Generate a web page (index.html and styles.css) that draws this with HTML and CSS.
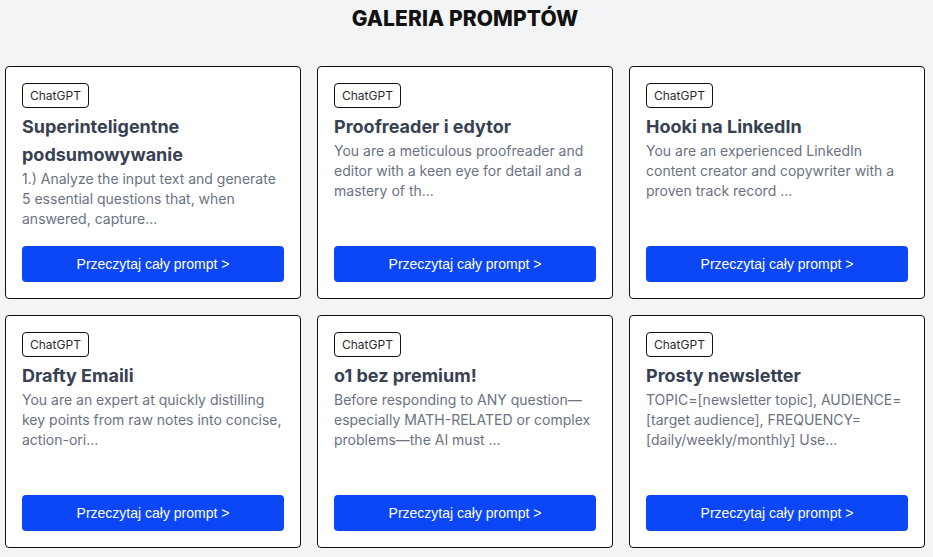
FILE: index.html
```html
<!DOCTYPE html>
<html lang="pl">
<head>
<meta charset="utf-8">
<title>Galeria promptów</title>
<link rel="stylesheet" href="styles.css">
</head>
<body>
<main class="page">
  <h1 class="page-title">GALERIA PROMPTÓW</h1>
  <section class="grid">
    <article class="card">
      <span class="badge">ChatGPT</span>
      <h2 class="card-title">Superinteligentne podsumowywanie</h2>
      <p class="card-desc">1.) Analyze the input text and generate 5 essential questions that, when answered, capture...</p>
      <a class="btn" href="#">Przeczytaj cały prompt &gt;</a>
    </article>
    <article class="card">
      <span class="badge">ChatGPT</span>
      <h2 class="card-title">Proofreader i edytor</h2>
      <p class="card-desc">You are a meticulous proofreader and editor with a keen eye for detail and a mastery of th...</p>
      <a class="btn" href="#">Przeczytaj cały prompt &gt;</a>
    </article>
    <article class="card">
      <span class="badge">ChatGPT</span>
      <h2 class="card-title">Hooki na LinkedIn</h2>
      <p class="card-desc">You are an experienced LinkedIn content creator and copywriter with a proven track record ...</p>
      <a class="btn" href="#">Przeczytaj cały prompt &gt;</a>
    </article>
    <article class="card">
      <span class="badge">ChatGPT</span>
      <h2 class="card-title">Drafty Emaili</h2>
      <p class="card-desc">You are an expert at quickly distilling key points from raw notes into concise, action-ori...</p>
      <a class="btn" href="#">Przeczytaj cały prompt &gt;</a>
    </article>
    <article class="card">
      <span class="badge">ChatGPT</span>
      <h2 class="card-title">o1 bez premium!</h2>
      <p class="card-desc">Before responding to ANY question—especially MATH-RELATED or complex problems—the AI must ...</p>
      <a class="btn" href="#">Przeczytaj cały prompt &gt;</a>
    </article>
    <article class="card">
      <span class="badge">ChatGPT</span>
      <h2 class="card-title">Prosty newsletter</h2>
      <p class="card-desc">TOPIC=[newsletter topic], AUDIENCE=[target audience], FREQUENCY=[daily/weekly/monthly] Use...</p>
      <a class="btn" href="#">Przeczytaj cały prompt &gt;</a>
    </article>
  </section>
</main>
</body>
</html>
```

FILE: styles.css
```css
* { box-sizing: border-box; }

html, body {
  margin: 0;
  padding: 0;
  background: #f3f4f6;
  font-family: Inter, "Noto Sans", sans-serif;
}

.page {
  padding: 0 8px 0 5px;
}

.page-title {
  margin: 0;
  padding-top: 6px;
  height: 66px;
  text-align: center;
  font-size: 21px;
  font-weight: 800;
  line-height: 25px;
  color: #111111;
  letter-spacing: 0.1px;
}

.grid {
  display: grid;
  grid-template-columns: repeat(3, 296px);
  grid-auto-rows: 1fr;
  column-gap: 16px;
  row-gap: 16px;
}

.card {
  display: flex;
  flex-direction: column;
  align-items: flex-start;
  background: #ffffff;
  border: 1px solid #111111;
  border-radius: 4px;
  padding: 16px;
}

.badge {
  display: inline-block;
  height: 25px;
  padding: 0 7px;
  border: 1px solid #111111;
  border-radius: 4px;
  font-size: 12px;
  line-height: 23px;
  color: #2d2d2d;
}

.card-title {
  margin: 5px 0 0;
  font-size: 18px;
  font-weight: 700;
  line-height: 28px;
  color: #374151;
}

.card-desc {
  flex: 1;
  margin: 0;
  font-size: 14px;
  line-height: 20px;
  color: #6b7280;
}

.btn {
  display: block;
  width: 100%;
  height: 36px;
  margin-top: 17px;
  border-radius: 4px;
  background: #0b47f7;
  color: #ffffff;
  text-decoration: none;
  text-align: center;
  font-family: "Liberation Sans", Arial, sans-serif;
  font-size: 14px;
  line-height: 36px;
}
```
